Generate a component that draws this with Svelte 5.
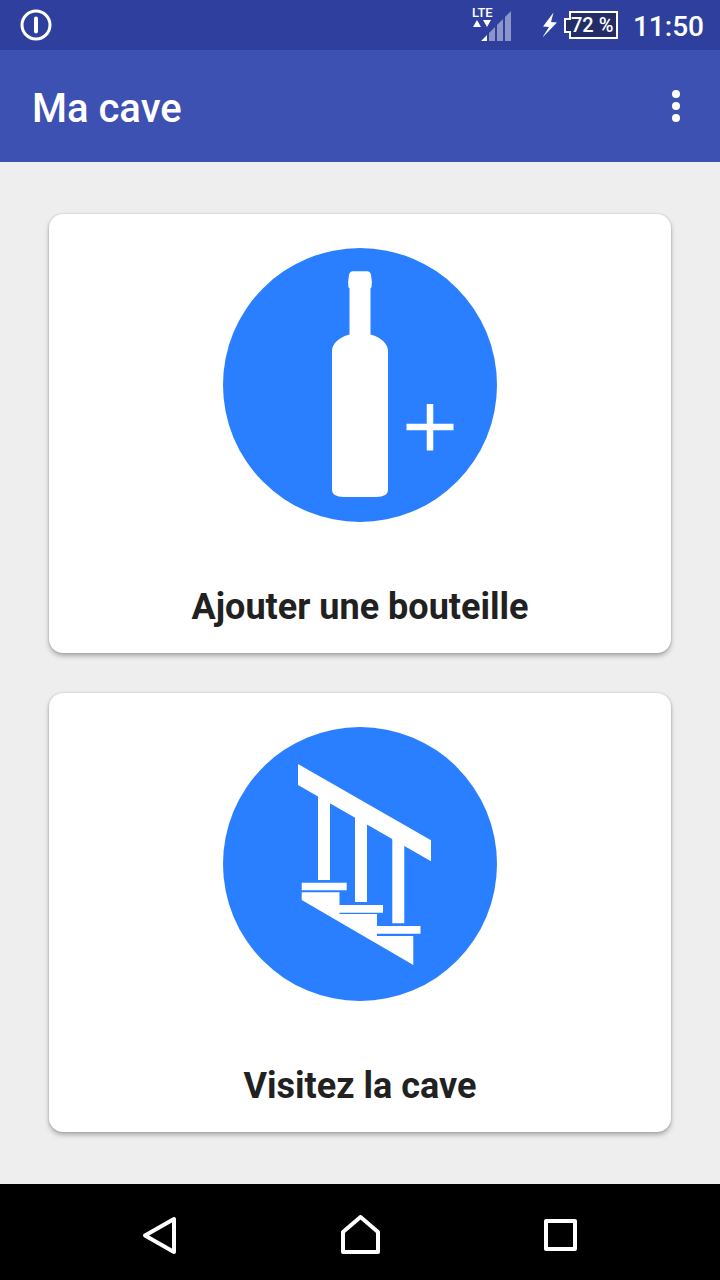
<script>
  let time = "11:50";
  let battery = 72;

  const actions = [
    { id: "add", label: "Ajouter une bouteille" },
    { id: "visit", label: "Visitez la cave" }
  ];
</script>

<style>
  :global(body) {
    margin: 0;
    background: #eee;
    font-family: Roboto, "Noto Sans", sans-serif;
  }

  button {
    display: block;
    margin: 0;
    padding: 0;
    border: none;
    background: none;
    color: inherit;
    font: inherit;
    cursor: pointer;
  }

  svg {
    display: block;
  }

  .screen {
    display: flex;
    flex-direction: column;
    min-height: 100vh;
  }

  .status-bar {
    display: flex;
    align-items: center;
    height: 50px;
    padding: 0 16px 0 20px;
    background: #2f3f9e;
    color: white;
    font-weight: 500;
  }

  .signal {
    margin-left: auto;
  }

  .signal text {
    font-size: 13px;
    font-weight: 500;
  }

  .power {
    display: flex;
    align-items: center;
    margin: 0 14px 0 30px;
  }

  .battery text {
    font-size: 20px;
  }

  .clock {
    font-size: 28px;
    line-height: 32px;
    padding-top: 3px;
  }

  .app-bar {
    display: flex;
    align-items: center;
    justify-content: space-between;
    height: 112px;
    padding: 0 24px 0 32px;
    background: #3d51b3;
    color: white;
  }

  h1 {
    margin: 0;
    padding-top: 6px;
    font-size: 40px;
    line-height: 48px;
    font-weight: 500;
  }

  main {
    display: flex;
    flex: 1;
    flex-direction: column;
    gap: 40px;
    padding: 52px 49px;
  }

  .card {
    display: flex;
    flex-direction: column;
    align-items: center;
    gap: 64px;
    width: 100%;
    padding: 34px 16px 25px;
    border-radius: 14px;
    background: white;
    box-shadow: 0 3px 5px rgba(0, 0, 0, 0.28), 0 0 2px rgba(0, 0, 0, 0.2);
    color: #212121;
  }

  .card-label {
    font-size: 36px;
    line-height: 42px;
    font-weight: 700;
  }

  .nav-bar {
    display: grid;
    grid-template-columns: repeat(3, 1fr);
    height: 96px;
    padding: 0 60px;
    background: black;
  }

  .nav-bar button {
    display: flex;
    align-items: center;
    justify-content: center;
    padding-top: 6px;
  }
</style>

<div class="screen">
  <header>
    <div class="status-bar">
      <svg width="32" height="32" viewBox="0 0 32 32" fill="none" stroke="white" aria-hidden="true">
        <circle cx="16" cy="16" r="14" stroke-width="3" />
        <path d="M16 9.5v13" stroke-width="4" stroke-linecap="round" />
      </svg>

      <svg class="signal" width="41" height="38" viewBox="0 0 41 38" fill="white" role="img" aria-label="Signal LTE">
        <text x="0" y="11">LTE</text>
        <path d="M1 21l4-7 4 7zM11 14h8l-4 7zM9 35l6-6v6z" />
        <path fill-opacity="0.45" d="M17 27l6-6v14h-6zM25 19l6-6v22h-6zM33 11l6-6v30h-6z" />
      </svg>

      <div class="power">
        <svg width="20" height="28" viewBox="0 0 20 28" fill="white" aria-hidden="true">
          <path d="M10.500 1.500L0 15.500l6 .5L-1 27l15-15.500-6-.5z" />
        </svg>
        <svg class="battery" width="56" height="28" viewBox="0 0 56 28">
          <path d="M7 1h47v26H7v-6H2V8h5z" fill="#222d68" stroke="white" stroke-width="2" />
          <text x="8" y="21" fill="white">{battery} %</text>
        </svg>
      </div>

      <span class="clock">{time}</span>
    </div>

    <div class="app-bar">
      <h1>Ma cave</h1>
      <button type="button" aria-label="Plus d'options">
        <svg width="40" height="48" viewBox="0 0 40 48" fill="white">
          <circle cx="20" cy="12" r="4" />
          <circle cx="20" cy="24" r="4" />
          <circle cx="20" cy="36" r="4" />
        </svg>
      </button>
    </div>
  </header>

  <main>
    {#each actions as action (action.id)}
      <button class="card" type="button">
        <svg width="274" height="274" viewBox="0 0 274 274" fill="white" aria-hidden="true">
          <circle cx="137" cy="137" r="137" fill="#297fff" />
          {#if action.id === 'add'}
            <path
              d="M130 23.200H144Q147.500 23.200 148 27Q149.500 34 148.500 39.500L147.500 40V86.500C157 89 165 95 165 103V242Q165 249 153 249H121Q109 249 109 242V103C109 95 117 89 126.500 86.500V40L125.500 39.500Q124.500 34 126 27Q126.500 23.200 130 23.200Z" />
            <path d="M183.500 179h47M207 156v46.500" stroke="white" stroke-width="6.500" />
          {:else}
            <path d="M75 37l133 76.300v21L75 58z" />
            <path d="M95 60h12v93H95zM132 80h12v95h-12zM169.300 102h12v94.300h-12z" />
            <path d="M78.700 155.700h45v7.600h-45zM116 178H160v7.700h-44zM153.500 199h44v7.700h-44z" />
            <path d="M78.700 165.300h37.800v21.600H154V209h36.300v29L78.700 173z" />
          {/if}
        </svg>
        <span class="card-label">{action.label}</span>
      </button>
    {/each}
  </main>

  <nav class="nav-bar">
    <button type="button" aria-label="Retour">
      <svg width="40" height="40" viewBox="0 0 40 40" fill="none" stroke="white" stroke-width="4" stroke-linejoin="round">
        <path d="M5 20.500L34 4v33z" />
      </svg>
    </button>
    <button type="button" aria-label="Accueil">
      <svg width="40" height="40" viewBox="0 0 40 40" fill="none" stroke="white" stroke-width="4" stroke-linejoin="round">
        <path d="M3 17L20.500 2 38 17v20H3z" />
      </svg>
    </button>
    <button type="button" aria-label="Applications récentes">
      <svg width="40" height="40" viewBox="0 0 40 40" fill="none" stroke="white" stroke-width="4" stroke-linejoin="round">
        <rect x="6" y="6" width="29" height="28" />
      </svg>
    </button>
  </nav>
</div>
